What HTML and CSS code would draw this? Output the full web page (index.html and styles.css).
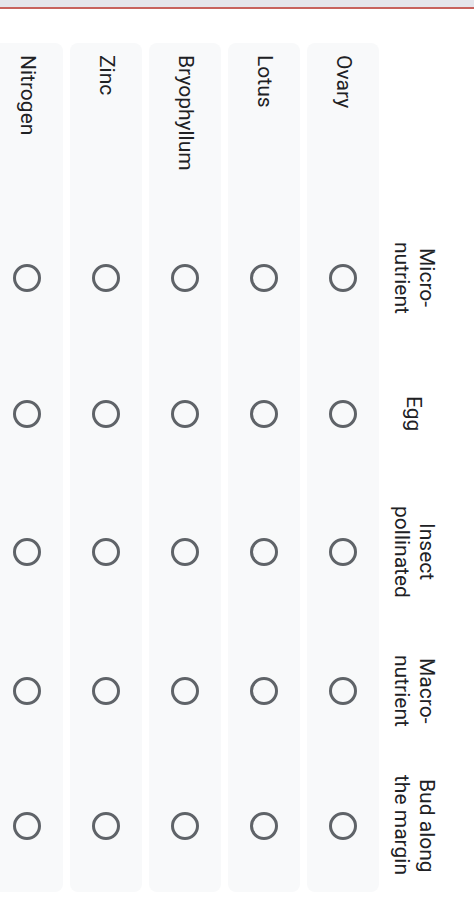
FILE: index.html
```html
<!DOCTYPE html>
<html lang="en">
<head>
<meta charset="utf-8">
<title>Grid</title>
<link rel="stylesheet" href="styles.css">
</head>
<body>
<div class="topbar"></div>
<div class="grid">
  <div class="row header">
    <div class="label"></div>
    <div class="col">Micro-nutrient</div>
    <div class="col">Egg</div>
    <div class="col">Insect pollinated</div>
    <div class="col">Macro-nutrient</div>
    <div class="col">Bud along the margin</div>
  </div>
  <div class="row item">
    <div class="label">Ovary</div>
    <div class="cell"><span class="radio"></span></div>
    <div class="cell"><span class="radio"></span></div>
    <div class="cell"><span class="radio"></span></div>
    <div class="cell"><span class="radio"></span></div>
    <div class="cell"><span class="radio"></span></div>
  </div>
  <div class="row item">
    <div class="label">Lotus</div>
    <div class="cell"><span class="radio"></span></div>
    <div class="cell"><span class="radio"></span></div>
    <div class="cell"><span class="radio"></span></div>
    <div class="cell"><span class="radio"></span></div>
    <div class="cell"><span class="radio"></span></div>
  </div>
  <div class="row item">
    <div class="label">Bryophyllum</div>
    <div class="cell"><span class="radio"></span></div>
    <div class="cell"><span class="radio"></span></div>
    <div class="cell"><span class="radio"></span></div>
    <div class="cell"><span class="radio"></span></div>
    <div class="cell"><span class="radio"></span></div>
  </div>
  <div class="row item">
    <div class="label">Zinc</div>
    <div class="cell"><span class="radio"></span></div>
    <div class="cell"><span class="radio"></span></div>
    <div class="cell"><span class="radio"></span></div>
    <div class="cell"><span class="radio"></span></div>
    <div class="cell"><span class="radio"></span></div>
  </div>
  <div class="row item">
    <div class="label">Nitrogen</div>
    <div class="cell"><span class="radio"></span></div>
    <div class="cell"><span class="radio"></span></div>
    <div class="cell"><span class="radio"></span></div>
    <div class="cell"><span class="radio"></span></div>
    <div class="cell"><span class="radio"></span></div>
  </div>
</div>
</body>
</html>
```
FILE: styles.css
```css
* { box-sizing: border-box; }
html, body { margin: 0; padding: 0; background: #fff; }
body {
  width: 474px;
  height: 912px;
  overflow: hidden;
  font-family: Roboto, "Noto Sans", sans-serif;
  font-size: 21px;
  color: #202124;
}
.topbar {
  height: 9px;
  background: #e5e5eb;
  border-bottom: 2px solid #c8625d;
}
.grid {
  writing-mode: vertical-rl;
  width: 474px;
  height: 903px;
  padding-top: 34px;
  padding-right: 33px;
  display: flex;
  flex-direction: column;
  align-items: flex-start;
  gap: 7px;
}
.row {
  display: grid;
  grid-template-columns: 168px 134px 137px 140px 137px 133px;
  block-size: 72px;
  flex: none;
}
.row.header { block-size: 55px; }
.row.item {
  background: #f8f9fa;
  border-radius: 8px;
}
.label {
  align-self: center;
  padding-inline-start: 12px;
  line-height: 25px;
}
.col {
  align-self: center;
  text-align: center;
  line-height: 25px;
  padding-inline: 10px;
}
.cell {
  display: flex;
  align-items: center;
  justify-content: center;
}
.radio {
  display: block;
  width: 28px;
  height: 28px;
  border: 3px solid #5f6368;
  border-radius: 50%;
}
```
